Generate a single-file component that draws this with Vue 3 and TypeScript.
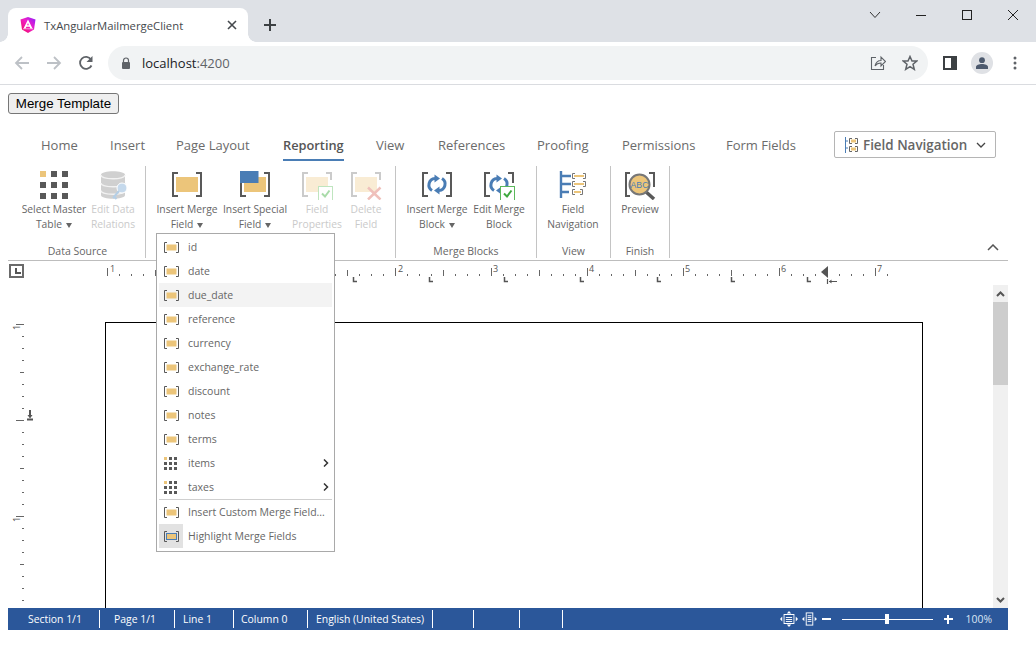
<template>
  <svg class="defs" aria-hidden="true">
    <defs>
      <linearGradient id="ngGrad" x1="1" y1="0" x2="0" y2="1">
        <stop offset="0" stop-color="#8a1eff" />
        <stop offset="0.45" stop-color="#f01fc8" />
        <stop offset="1" stop-color="#f0085a" />
      </linearGradient>
      <symbol id="brackets" viewBox="0 0 32 30">
        <path d="M7 3H2V26H7M25 3H30V26H25" fill="none" stroke="#595959" stroke-width="2" />
      </symbol>
      <symbol id="i-grid" viewBox="0 0 32 30">
        <rect x="2" y="1" width="6" height="6" fill="#ecc57a" />
        <rect x="13" y="1" width="6" height="6" fill="#595959" />
        <rect x="24" y="1" width="6" height="6" fill="#595959" />
        <rect x="2" y="12" width="6" height="6" fill="#595959" />
        <rect x="13" y="12" width="6" height="6" fill="#595959" />
        <rect x="24" y="12" width="6" height="6" fill="#595959" />
        <rect x="2" y="23" width="6" height="6" fill="#595959" />
        <rect x="13" y="23" width="6" height="6" fill="#595959" />
        <rect x="24" y="23" width="6" height="6" fill="#595959" />
      </symbol>
      <symbol id="i-db" viewBox="0 0 32 30">
        <path d="M4 5C4 0 28 0 28 5V25C28 30 4 30 4 25Z" fill="#d0d0d0" />
        <path d="M4 5C4 10 28 10 28 5M4 13C4 18 28 18 28 13M4 20.500C4 25.500 28 25.500 28 20.500" fill="none" stroke="#f2f2f2" stroke-width="1.300" />
        <circle cx="25" cy="18" r="5" fill="#c5d9ec" stroke="#fff" />
        <path d="M22 21L16 28M17 26.500L19.500 29" fill="none" stroke="#b5cfe6" stroke-width="2" />
      </symbol>
      <symbol id="i-field" viewBox="0 0 32 30">
        <use href="#brackets" width="32" height="30" />
        <rect x="5" y="7" width="22" height="15" fill="#ecc57a" />
      </symbol>
      <symbol id="i-special" viewBox="0 0 32 30">
        <use href="#brackets" width="32" height="30" />
        <rect x="5" y="7" width="22" height="15" fill="#ecc57a" />
        <rect x="1" y="1" width="18.500" height="12" fill="#4a7db5" />
      </symbol>
      <symbol id="i-props" viewBox="0 0 32 30">
        <path d="M7 3H2V26H7M25 3H30V10" fill="none" stroke="#cbcbcb" stroke-width="2" />
        <rect x="5" y="7" width="22" height="15" fill="#f9ecd4" />
        <rect x="17.500" y="16.500" width="14" height="14" fill="#fff" stroke="#bfe5bf" />
        <path d="M21 23.500L24 26.500L28.500 20.500" fill="none" stroke="#a9dba9" stroke-width="2" />
      </symbol>
      <symbol id="i-delete" viewBox="0 0 32 30">
        <path d="M7 3H2V26H7M25 3H30V10" fill="none" stroke="#cbcbcb" stroke-width="2" />
        <rect x="5" y="7" width="22" height="15" fill="#f9ecd4" />
        <path d="M18 17.500L30.500 29.500M30.500 17.500L18 29.500" fill="none" stroke="#efc0bb" stroke-width="2.500" />
      </symbol>
      <symbol id="i-block" viewBox="0 0 32 30">
        <use href="#brackets" width="32" height="30" />
        <path d="M14 8.500A6.500 6.500 0 0 0 11 20.500M18 20.500A6.500 6.500 0 0 0 21 8.500" fill="none" stroke="#4a7db5" stroke-width="3" />
        <path d="M13.500 4.500L19 8.500L13.500 12.500ZM18.500 16.500L13 20.500L18.500 24.500Z" fill="#4a7db5" />
      </symbol>
      <symbol id="i-editblock" viewBox="0 0 32 30">
        <path d="M7 3H2V26H7M25 3H30V13" fill="none" stroke="#595959" stroke-width="2" />
        <path d="M14 8.500A6.500 6.500 0 0 0 11 20.500M18 20.500A6.500 6.500 0 0 0 21 8.500" fill="none" stroke="#4a7db5" stroke-width="3" />
        <path d="M13.500 4.500L19 8.500L13.500 12.500ZM18.500 16.500L13 20.500L18.500 24.500Z" fill="#4a7db5" />
        <rect x="17.500" y="16.500" width="14" height="14" fill="#fff" stroke="#5cb85c" />
        <path d="M21 23.500L24 26.500L28.500 20.500" fill="none" stroke="#3fa83f" stroke-width="2" />
      </symbol>
      <symbol id="i-nav" viewBox="0 0 32 30">
        <path d="M4 1V28M4 6H14M4 14H14M4 22H12" fill="none" stroke="#4a7db5" stroke-width="2.400" />
        <path d="M18 3.500H15.500V8.500H18M26 3.500H28.500V8.500H26M18 11.500H15.500V16.500H18M26 11.500H28.500V16.500H26M18 19.500H15.500V24.500H18M23 19.500H25.500V24.500H23" fill="none" stroke="#777" />
        <path d="M17 6H27M17 14H27M17 22H24" stroke="#ecc57a" stroke-width="2" />
      </symbol>
      <symbol id="i-preview" viewBox="0 0 32 30">
        <path d="M6 3H2V26H6M25 3H30V17" fill="none" stroke="#595959" stroke-width="2" />
        <path d="M21 21L30 29" stroke="#595959" stroke-width="3.500" />
        <circle cx="15.500" cy="14.500" r="10" fill="#ecc57a" stroke="#777" stroke-width="2" />
      </symbol>
      <symbol id="m-field" viewBox="0 0 15 11">
        <path d="M3 .500H.500V10.500H3M12 .500H14.500V10.500H12" fill="none" stroke="#595959" />
        <rect x="2.500" y="2.500" width="10" height="6" fill="#ecc57a" />
      </symbol>
      <symbol id="m-grid" viewBox="0 0 15 13">
        <rect x="0" y="0" width="3" height="3" fill="#ecc57a" />
        <rect x="5" y="0" width="3" height="3" fill="#595959" />
        <rect x="10" y="0" width="3" height="3" fill="#595959" />
        <rect x="0" y="5" width="3" height="3" fill="#595959" />
        <rect x="5" y="5" width="3" height="3" fill="#595959" />
        <rect x="10" y="5" width="3" height="3" fill="#595959" />
        <rect x="0" y="10" width="3" height="3" fill="#595959" />
        <rect x="5" y="10" width="3" height="3" fill="#595959" />
        <rect x="10" y="10" width="3" height="3" fill="#595959" />
      </symbol>
      <symbol id="m-highlight" viewBox="0 0 15 11">
        <path d="M3 .500H.500V10.500H3M12 .500H14.500V10.500H12" fill="none" stroke="#595959" />
        <rect x="2.500" y="2.500" width="10" height="6" fill="#ecc57a" stroke="#4a7db5" />
      </symbol>
    </defs>
  </svg>

  <div class="browser">
    <div class="tabstrip">
      <div class="tab">
        <svg class="favicon" width="16" height="16" viewBox="0 0 16 16">
          <path d="M8 0L.5 2.500L2 12.500L8 16L14 12.500L15.500 2.500Z" fill="url(#ngGrad)" />
          <path d="M8 2.500L3.500 11.500H5.600L6.400 9.800H9.600L10.400 11.500H12.500ZM7.100 8.300L8 6L8.900 8.300Z" fill="#fff" />
          <path d="M3 11.800H13" stroke="#fff" stroke-width=".6" />
        </svg>
        <span class="tab-title">TxAngularMailmergeClient</span>
        <svg class="tab-close" width="10" height="10" viewBox="0 0 10 10">
          <path d="M1 1L9 9M9 1L1 9" stroke="#45494d" stroke-width="1.600" />
        </svg>
      </div>
      <svg class="new-tab" width="14" height="14" viewBox="0 0 14 14">
        <path d="M7 1V13M1 7H13" stroke="#3c4043" stroke-width="2" />
      </svg>
      <div class="window-btns">
        <svg class="win-chevron" width="12" height="8" viewBox="0 0 12 8"><path d="M1 1L6 6.500L11 1" fill="none" stroke="#333" /></svg>
        <svg width="10" height="10" viewBox="0 0 10 10"><path d="M0 5.500H10" stroke="#222" /></svg>
        <svg width="10" height="10" viewBox="0 0 10 10"><rect x=".500" y=".500" width="9" height="9" fill="none" stroke="#222" /></svg>
        <svg width="10" height="10" viewBox="0 0 10 10"><path d="M0 0L10 10M10 0L0 10" stroke="#222" /></svg>
      </div>
    </div>
    <div class="toolbar">
      <svg class="nav-icon" width="16" height="16" viewBox="0 0 16 16"><path d="M15 8H2M8 2L2 8L8 14" fill="none" stroke="#bdc1c6" stroke-width="1.800" /></svg>
      <svg class="nav-icon" width="16" height="16" viewBox="0 0 16 16"><path d="M1 8H14M8 2L14 8L8 14" fill="none" stroke="#bdc1c6" stroke-width="1.800" /></svg>
      <svg class="nav-icon" width="16" height="16" viewBox="0 0 16 16"><path d="M13.500 10.500A6 6 0 1 1 13 4.500" fill="none" stroke="#5f6368" stroke-width="1.800" /><path d="M14.500 1V7H8.500Z" fill="#5f6368" /></svg>
      <div class="omnibox">
        <svg width="10" height="12" viewBox="0 0 10 12"><path d="M2.500 5V3.500A2.500 2.500 0 0 1 7.500 3.500V5" fill="none" stroke="#5f6368" stroke-width="1.200" /><rect x="1" y="5" width="8" height="7" rx="1" fill="#5f6368" /></svg>
        <span class="url">localhost<span class="port">:4200</span></span>
        <svg class="share" width="16" height="16" viewBox="0 0 16 16"><path d="M6 2.500H1.500V14.500H13.500V10M5 11C6 7 9 5.500 11 5.500V2L15.500 6.500L11 11V8C9 8 6.500 8.800 5 11Z" fill="none" stroke="#5f6368" stroke-width="1.100" /></svg>
        <svg class="star" width="16" height="16" viewBox="0 0 16 16"><path d="M8 1.500L10 6H14.800L11 9.300L12.300 14.300L8 11.600L3.700 14.300L5 9.300L1.200 6H6Z" fill="none" stroke="#5f6368" stroke-width="1.500" /></svg>
      </div>
      <svg class="panel" width="14" height="14" viewBox="0 0 14 14"><rect x="1" y="1" width="12" height="12" fill="none" stroke="#3c4043" stroke-width="2" /><rect x="8" y="1" width="5" height="12" fill="#3c4043" /></svg>
      <div class="avatar">
        <svg width="12" height="12" viewBox="0 0 12 12"><circle cx="6" cy="3.200" r="2.900" fill="#4d5a6e" /><path d="M0 12V10C0 8 3 7 6 7S12 8 12 10V12Z" fill="#4d5a6e" /></svg>
      </div>
      <svg class="dots" width="4" height="14" viewBox="0 0 4 14"><circle cx="2" cy="2" r="1.500" fill="#5f6368" /><circle cx="2" cy="7" r="1.500" fill="#5f6368" /><circle cx="2" cy="12" r="1.500" fill="#5f6368" /></svg>
    </div>
  </div>

  <div class="page">
    <button class="merge-btn">Merge Template</button>

    <div class="ribbon-tabs">
      <a v-for="t in tabs" :key="t.name" class="ribbon-tab" :class="{ active: t.name === 'Reporting' }" :style="{ left: t.x + 'px' }">{{ t.name }}</a>
      <div class="field-nav">
        <svg width="15" height="16" viewBox="0 0 15 16">
          <path d="M1.500 0V16M1.500 4H4M1.500 11H4" fill="none" stroke="#4a7db5" />
          <path d="M8 1.500H5.500V6.500H8M11 1.500H13.500V6.500H11M8 9.500H5.500V14.500H8M11 9.500H13.500V14.500H11" fill="none" stroke="#666" />
          <path d="M7 4H12M7 12H12" stroke="#ecc57a" stroke-width="3" />
        </svg>
        <span>Field Navigation</span>
        <svg class="caret" width="10" height="6" viewBox="0 0 10 6"><path d="M1 1L5 5L9 1" fill="none" stroke="#444" stroke-width="1.300" /></svg>
      </div>
    </div>

    <div class="ribbon">
      <div v-for="g in groups" :key="g.id" class="group" :style="{ width: g.width + 'px', paddingLeft: g.pad + 'px' }">
        <div class="group-btns" :style="{ gap: g.gap + 'px' }">
          <div v-for="b in g.buttons" :key="b.icon" class="rbtn" :class="{ off: b.off }" :style="{ width: b.w + 'px' }">
            <svg class="big-icon" width="32" height="30">
              <use :href="'#' + b.icon" width="32" height="30" />
              <text v-if="b.icon === 'i-preview'" x="15.500" y="17.500" text-anchor="middle" class="abc">ABC</text>
            </svg>
            <span>{{ b.l1 }}</span>
            <span>{{ b.l2 }}<i v-if="b.drop" class="tri"></i></span>
          </div>
        </div>
        <div class="group-label" :style="{ marginLeft: g.labelShift - g.pad + 'px' }">{{ g.label }}</div>
      </div>
      <svg class="collapse" width="12" height="7" viewBox="0 0 12 7"><path d="M1 6L6 1L11 6" fill="none" stroke="#555" stroke-width="1.500" /></svg>
    </div>

    <div class="ruler-row">
      <div class="ruler-corner"><i></i></div>
      <svg class="h-ruler" width="1000" height="24">
        <rect v-for="t in hTicks" :key="t.x" :x="t.x" :y="t.y" width="1" :height="t.h" fill="#666" />
        <text v-for="n in hLabels" :key="n.x" :x="n.x" y="11" class="ruler-num">{{ n.t }}</text>
        <path v-for="x in tabStops" :key="x" :d="`M${x}.500 16V20.500H${x + 4}`" fill="none" stroke="#555" stroke-width="1.500" />
        <path d="M813 11L820 5V17Z" fill="#555" />
        <path d="M819.500 18V23M821 20.500H829" fill="none" stroke="#555" stroke-width="1.200" />
        <path d="M821 20.500L823.500 18.500V22.500Z" fill="#555" />
      </svg>
    </div>

    <div class="editor">
      <svg class="v-ruler" width="30" height="323">
        <rect v-for="t in vTicks" :key="t.y" :x="t.x" :y="t.y" :width="t.w" height="1" fill="#666" />
        <text x="0" y="0" transform="translate(12 45) rotate(-90)" class="ruler-num">1</text>
        <text x="0" y="0" transform="translate(12 237) rotate(-90)" class="ruler-num">1</text>
        <path d="M22 125V131M19 134.500H25" fill="none" stroke="#555" stroke-width="2" />
        <path d="M19.500 130H24.500L22 133.500Z" fill="#555" />
      </svg>
      <div class="canvas">
        <div class="sheet"></div>
      </div>
      <div class="scrollbar">
        <div class="sb-btn">
          <svg width="9" height="6" viewBox="0 0 9 6"><path d="M1 5L4.500 1.500L8 5" fill="none" stroke="#555" stroke-width="2" /></svg>
        </div>
        <div class="sb-thumb"></div>
        <div class="sb-track"></div>
        <div class="sb-btn">
          <svg width="9" height="6" viewBox="0 0 9 6"><path d="M1 1L4.500 4.500L8 1" fill="none" stroke="#555" stroke-width="2" /></svg>
        </div>
      </div>
    </div>

    <div class="status">
      <div v-for="c in statusCells" :key="c.w" class="cell" :style="{ width: c.w + 'px', paddingLeft: c.pad + 'px' }">{{ c.t }}</div>
      <div class="status-right">
        <svg width="18" height="16" viewBox="0 0 20 16" preserveAspectRatio="none">
          <path d="M10 0L7.500 2.500H12.500ZM10 16L7.500 13.500H12.500ZM0 8L2.500 5.500V10.500ZM20 8L17.500 5.500V10.500Z" fill="#fff" />
          <rect x="4.500" y="3.500" width="11" height="9" fill="none" stroke="#fff" />
          <path d="M6.500 6.500H13.500M6.500 8.500H13.500M6.500 10.500H13.500" stroke="#fff" />
        </svg>
        <svg class="fit-width" width="15" height="14" viewBox="0 0 16 14">
          <path d="M0 7L2.500 4.500V9.500ZM16 7L13.500 4.500V9.500Z" fill="#fff" />
          <rect x="4.500" y=".500" width="7" height="13" fill="none" stroke="#fff" />
          <path d="M6 3.500H10M6 5.500H10M6 7.500H10M6 9.500H10" stroke="#fff" />
        </svg>
        <span class="zoom-minus"></span>
        <div class="slider"><i></i></div>
        <span class="zoom-plus"></span>
        <span class="zoom-val">100%</span>
      </div>
    </div>

    <div class="menu">
      <div v-for="m in menuItems" :key="m.t" class="menu-item" :class="{ hover: m.t === 'due_date' }">
        <svg class="menu-icon" width="15" :height="m.sub ? 13 : 11"><use :href="m.sub ? '#m-grid' : '#m-field'" width="15" :height="m.sub ? 13 : 11" /></svg>
        <span>{{ m.t }}</span>
        <svg v-if="m.sub" class="sub-arrow" width="6" height="8" viewBox="0 0 6 8"><path d="M1 .500L4.500 4L1 7.500" fill="none" stroke="#333" stroke-width="1.500" /></svg>
      </div>
      <div class="menu-sep"></div>
      <div class="menu-item">
        <svg class="menu-icon" width="15" height="11"><use href="#m-field" width="15" height="11" /></svg>
        <span>Insert Custom Merge Field...</span>
      </div>
      <div class="menu-item toggled">
        <div class="toggle-box"><svg width="15" height="11"><use href="#m-highlight" width="15" height="11" /></svg></div>
        <span>Highlight Merge Fields</span>
      </div>
    </div>
  </div>
</template>

<script setup lang="ts">
interface RibbonButton {
  icon: string;
  l1: string;
  l2: string;
  w: number;
  drop?: boolean;
  off?: boolean;
}

interface RibbonGroup {
  id: string;
  label: string;
  width: number;
  pad: number;
  gap: number;
  labelShift: number;
  buttons: RibbonButton[];
}

const tabs = [
  { name: 'Home', x: 33 },
  { name: 'Insert', x: 102 },
  { name: 'Page Layout', x: 168 },
  { name: 'Reporting', x: 275 },
  { name: 'View', x: 368 },
  { name: 'References', x: 430 },
  { name: 'Proofing', x: 529 },
  { name: 'Permissions', x: 614 },
  { name: 'Form Fields', x: 718 },
];

const groups: RibbonGroup[] = [
  {
    id: 'source',
    label: 'Data Source',
    width: 138,
    pad: 13,
    gap: 0,
    labelShift: 2,
    buttons: [
      { icon: 'i-grid', l1: 'Select Master', l2: 'Table', w: 66, drop: true },
      { icon: 'i-db', l1: 'Edit Data', l2: 'Relations', w: 52, off: true },
    ],
  },
  {
    id: 'fields',
    label: '',
    width: 250,
    pad: 10,
    gap: 3,
    labelShift: 0,
    buttons: [
      { icon: 'i-field', l1: 'Insert Merge', l2: 'Field', w: 62, drop: true },
      { icon: 'i-special', l1: 'Insert Special', l2: 'Field', w: 68, drop: true },
      { icon: 'i-props', l1: 'Field', l2: 'Properties', w: 50, off: true },
      { icon: 'i-delete', l1: 'Delete', l2: 'Field', w: 42, off: true },
    ],
  },
  {
    id: 'blocks',
    label: 'Merge Blocks',
    width: 141,
    pad: 9,
    gap: 0,
    labelShift: 0,
    buttons: [
      { icon: 'i-block', l1: 'Insert Merge', l2: 'Block', w: 64, drop: true },
      { icon: 'i-editblock', l1: 'Edit Merge', l2: 'Block', w: 60 },
    ],
  },
  {
    id: 'view',
    label: 'View',
    width: 74,
    pad: 6,
    gap: 0,
    labelShift: 0,
    buttons: [{ icon: 'i-nav', l1: 'Field', l2: 'Navigation', w: 60 }],
  },
  {
    id: 'finish',
    label: 'Finish',
    width: 59,
    pad: 4,
    gap: 0,
    labelShift: 0,
    buttons: [{ icon: 'i-preview', l1: 'Preview', l2: '', w: 50 }],
  },
];

// ruler starts at page x=8, 12px per tick and 96px per inch
const hTicks: { x: number; y: number; h: number }[] = [];
for (let x = 99; x < 880; x += 12) {
  const step = (x - 99) / 12;
  if (step % 8 === 0) hTicks.push({ x, y: 7, h: 8 });
  else if (step % 4 === 0) hTicks.push({ x, y: 9, h: 6 });
  else hTicks.push({ x, y: 13, h: 2 });
}

const hLabels = [
  { x: 102, t: '1' },
  { x: 390, t: '2' },
  { x: 485, t: '3' },
  { x: 581, t: '4' },
  { x: 677, t: '5' },
  { x: 773, t: '6' },
  { x: 869, t: '7' },
];

const tabStops = [345, 421, 496, 572, 649, 723, 799];

const vTicks: { x: number; y: number; w: number }[] = [];
for (let y = 39; y < 323; y += 12) {
  const step = (y - 39) / 12;
  if (step % 8 === 0) vTicks.push({ x: 8, y, w: 8 });
  else if (step % 4 === 0) vTicks.push({ x: 12, y, w: 4 });
  else vTicks.push({ x: 14, y, w: 2 });
}

const statusCells = [
  { t: 'Section 1/1', w: 92, pad: 20 },
  { t: 'Page 1/1', w: 75, pad: 14 },
  { t: 'Line 1', w: 59, pad: 8 },
  { t: 'Column 0', w: 74, pad: 7 },
  { t: 'English (United States)', w: 125, pad: 8 },
  { t: '', w: 41, pad: 0 },
  { t: '', w: 46, pad: 0 },
  { t: '', w: 43, pad: 0 },
];

const menuItems = [
  { t: 'id' },
  { t: 'date' },
  { t: 'due_date' },
  { t: 'reference' },
  { t: 'currency' },
  { t: 'exchange_rate' },
  { t: 'discount' },
  { t: 'notes' },
  { t: 'terms' },
  { t: 'items', sub: true },
  { t: 'taxes', sub: true },
];
</script>

<style>
html,
body {
  margin: 0;
  background: #fff;
  overflow: hidden;
}
</style>

<style scoped>
.defs {
  position: absolute;
  width: 0;
  height: 0;
}

.browser {
  font-family: 'Open Sans', 'Liberation Sans', sans-serif;
}

.tabstrip {
  position: relative;
  display: flex;
  align-items: flex-end;
  height: 42px;
  background: #dee1e6;
}

.tab {
  position: relative;
  display: flex;
  align-items: center;
  width: 240px;
  height: 34px;
  margin-left: 8px;
  padding: 0 11px 0 12px;
  box-sizing: border-box;
  background: #fff;
  border-radius: 8px 8px 0 0;
}

.tab::before,
.tab::after {
  content: '';
  position: absolute;
  bottom: 0;
  width: 8px;
  height: 8px;
}

.tab::before {
  left: -8px;
  background: radial-gradient(circle at 0 0, #dee1e6 7.5px, #fff 8px);
}

.tab::after {
  right: -8px;
  background: radial-gradient(circle at 100% 0, #dee1e6 7.5px, #fff 8px);
}

.favicon {
  flex: none;
}

.tab-title {
  flex: 1;
  margin-left: 8px;
  font-size: 11.3px;
  color: #45494d;
}

.new-tab {
  margin: 0 0 10px 15px;
}

.window-btns {
  position: absolute;
  top: 10px;
  right: 18px;
  display: flex;
  align-items: center;
  gap: 36px;
}

.win-chevron {
  margin-right: -1px;
}

.toolbar {
  display: flex;
  align-items: center;
  height: 42px;
  border-bottom: 1px solid #dadce0;
}

.nav-icon {
  margin-left: 14px;
  margin-right: 2px;
}

.omnibox {
  display: flex;
  align-items: center;
  width: 820px;
  height: 34px;
  margin-left: 12px;
  padding: 0 10px 0 13px;
  box-sizing: border-box;
  background: #f1f3f4;
  border-radius: 17px;
}

.url {
  flex: 1;
  margin-left: 11px;
  font-size: 13px;
  color: #202124;
}

.port {
  color: #5f6368;
}

.share {
  margin-right: 16px;
}

.panel {
  margin-left: 15px;
}

.avatar {
  display: flex;
  align-items: center;
  justify-content: center;
  width: 22px;
  height: 22px;
  margin-left: 14px;
  background: #dfe1e5;
  border-radius: 50%;
}

.dots {
  margin-left: 20px;
}

.page {
  position: relative;
  width: 1000px;
  margin: 0 8px;
  padding-top: 8px;
  font-family: 'Open Sans', 'Liberation Sans', sans-serif;
}

.merge-btn {
  display: block;
  width: 111px;
  height: 21px;
  padding: 0;
  background: #efefef;
  border: 1px solid #767676;
  border-radius: 3px;
  font-family: 'Liberation Sans', Arial, sans-serif;
  font-size: 13.33px;
  color: #000;
}

.ribbon-tabs {
  position: relative;
  height: 38px;
  margin-top: 9px;
}

.ribbon-tab {
  position: absolute;
  top: 0;
  line-height: 44px;
  font-size: 13px;
  color: #6b6b6b;
  white-space: nowrap;
}

.ribbon-tab.active {
  height: 36px;
  color: #555;
  font-weight: 600;
  font-size: 12.8px;
  border-bottom: 2px solid #4a7db5;
}

.field-nav {
  position: absolute;
  left: 826px;
  top: 8px;
  display: flex;
  align-items: center;
  width: 162px;
  height: 27px;
  padding-left: 9px;
  box-sizing: border-box;
  background: #fff;
  border: 1px solid #b5b5b5;
  border-radius: 2px;
  font-size: 13.4px;
  font-weight: 600;
  color: #666;
}

.field-nav span {
  margin-left: 4px;
}

.caret {
  margin-left: 9px;
}

.ribbon {
  position: relative;
  display: flex;
  height: 94px;
  padding-top: 5px;
  border-bottom: 1px solid #bdbdbd;
}

.group {
  position: relative;
  display: flex;
  flex-direction: column;
  box-sizing: border-box;
  height: 92px;
  border-right: 1px solid #c4c4c4;
}

.group-btns {
  display: flex;
  flex: none;
  box-sizing: border-box;
  height: 78px;
  padding-top: 4px;
}

.rbtn {
  display: flex;
  flex-direction: column;
  align-items: center;
  flex: none;
  font-size: 10.3px;
  line-height: 15px;
  color: #666;
  white-space: nowrap;
}

.rbtn.off {
  color: #cacaca;
}

.big-icon {
  flex: none;
  margin-bottom: 2px;
}

.abc {
  font-family: 'Liberation Sans', sans-serif;
  font-size: 8.7px;
  fill: #4a7db5;
}

.tri {
  display: inline-block;
  margin-left: 4px;
  border-left: 3px solid transparent;
  border-right: 3px solid transparent;
  border-top: 5px solid #666;
}

.group-label {
  font-size: 10.5px;
  line-height: 15px;
  text-align: center;
  color: #666;
}

.collapse {
  position: absolute;
  right: 9px;
  top: 83px;
}

.ruler-row {
  position: relative;
  height: 24px;
}

.ruler-corner {
  position: absolute;
  left: 1px;
  top: 3px;
  width: 15px;
  height: 14px;
  box-sizing: border-box;
  border: 2px solid #6a6a6a;
}

.ruler-corner i {
  position: absolute;
  left: 4px;
  top: 2px;
  width: 6px;
  height: 6px;
  box-sizing: border-box;
  border-left: 2px solid #555;
  border-bottom: 2px solid #555;
}

.h-ruler {
  display: block;
}

.ruler-num {
  font-family: 'Open Sans', sans-serif;
  font-size: 9px;
  fill: #555;
}

.editor {
  display: flex;
  height: 323px;
  overflow: hidden;
}

.v-ruler {
  flex: none;
}

.canvas {
  flex: 1;
  min-width: 0;
  padding: 37px 70px 0 67px;
  box-sizing: border-box;
}

.sheet {
  height: 400px;
  box-sizing: border-box;
  border: 1px solid #000;
}

.scrollbar {
  flex: none;
  display: flex;
  flex-direction: column;
  width: 15px;
  background: #f0f0f0;
}

.sb-btn {
  display: flex;
  align-items: center;
  justify-content: center;
  height: 17px;
}

.sb-thumb {
  height: 83px;
  background: #cdcdcd;
}

.sb-track {
  flex: 1;
}

.status {
  display: flex;
  align-items: center;
  height: 22px;
  background: #2b579a;
  color: #fff;
  font-size: 10.4px;
}

.cell {
  flex: none;
  height: 18px;
  line-height: 18px;
  box-sizing: border-box;
  border-right: 1px solid #fff;
  white-space: nowrap;
}

.status-right {
  display: flex;
  align-items: center;
  margin-left: auto;
  padding-right: 16px;
}

.fit-width {
  margin: 0 5px 0 4px;
}

.zoom-minus,
.zoom-plus {
  position: relative;
  display: block;
  width: 9px;
  height: 2px;
  background: #fff;
}

.zoom-plus::after {
  content: '';
  position: absolute;
  left: 3.500px;
  top: -3.500px;
  width: 2px;
  height: 9px;
  background: #fff;
}

.slider {
  position: relative;
  width: 91px;
  height: 1px;
  margin: 0 11px;
  background: #fff;
}

.slider i {
  position: absolute;
  left: 43px;
  top: -5px;
  width: 4px;
  height: 10px;
  background: #fff;
}

.zoom-val {
  margin-left: 13px;
  color: #dbe6f5;
}

.menu {
  position: absolute;
  left: 148px;
  top: 148px;
  width: 179px;
  padding: 1px 2px 3px;
  box-sizing: border-box;
  background: #fff;
  border: 1px solid #a9a9a9;
  font-size: 10.5px;
  color: #666;
}

.menu-item {
  position: relative;
  display: flex;
  align-items: center;
  height: 24px;
  padding-left: 5px;
}

.menu-item.hover {
  background: #f3f3f3;
}

.menu-icon {
  flex: none;
  margin-right: 9px;
}

.sub-arrow {
  position: absolute;
  right: 3px;
  top: 8px;
}

.menu-sep {
  height: 1px;
  background: #cfcfcf;
}

.menu-item.toggled {
  padding-left: 0;
}

.toggle-box {
  display: flex;
  align-items: center;
  justify-content: center;
  width: 24px;
  height: 24px;
  margin-right: 5px;
  background: #e2e2e2;
}
</style>
